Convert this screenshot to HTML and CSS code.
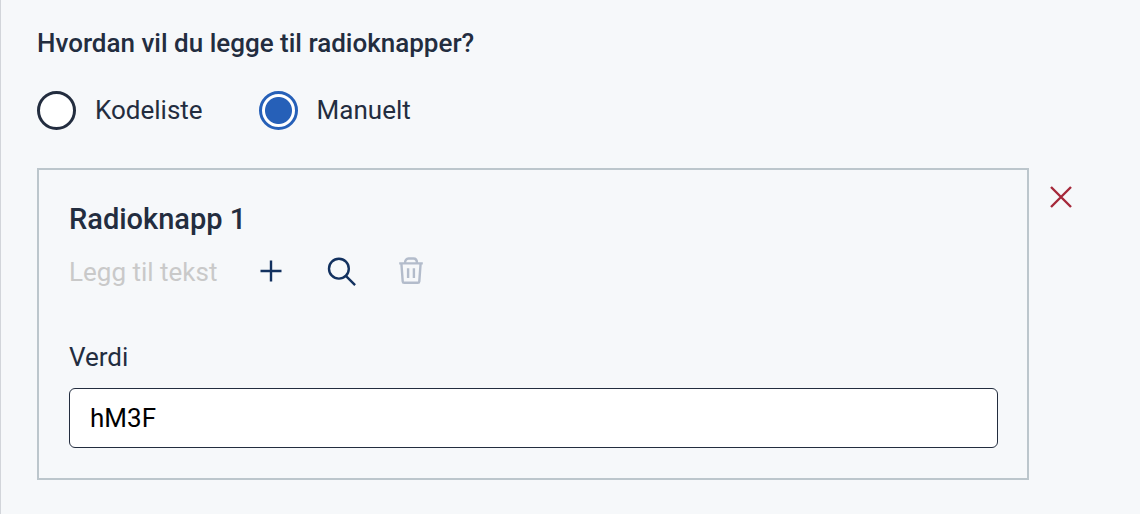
FILE: index.html
```html
<!DOCTYPE html>
<html lang="nb">
<head>
<meta charset="utf-8">
<title>Radioknapper</title>
<link rel="stylesheet" href="styles.css">
</head>
<body>
<main class="panel">
  <fieldset class="source">
    <legend class="source-title">Hvordan vil du legge til radioknapper?</legend>
    <div class="source-options">
      <label class="option"><input class="radio" type="radio" name="source" value="codelist"><span class="option-text">Kodeliste</span></label>
      <label class="option"><input class="radio" type="radio" name="source" value="manual" checked><span class="option-text">Manuelt</span></label>
    </div>
  </fieldset>
  <div class="item">
    <section class="card">
      <h2 class="card-title">Radioknapp 1</h2>
      <div class="text-row">
        <span class="placeholder">Legg til tekst</span>
        <div class="actions">
          <button class="icon-button" type="button" aria-label="Legg til">
            <svg class="icon" viewBox="0 0 32 32"><path d="M16 5.500v21M5.500 16h21"/></svg>
          </button>
          <button class="icon-button" type="button" aria-label="Søk">
            <svg class="icon" viewBox="0 0 32 32"><circle cx="13.900" cy="13.700" r="9.900"/><path d="M21.100 21.200l9 9"/></svg>
          </button>
          <button class="icon-button" type="button" aria-label="Slett" disabled>
            <svg class="icon" viewBox="0 0 32 32"><path d="M4.200 8.400h23.600M10 8.200c0-3 1.500-4.700 3.500-4.700h5c2 0 3.500 1.700 3.500 4.700M6.400 8.600l1.300 17.800q.1 1.400 1.500 1.400h13.600q1.400 0 1.500-1.400l1.300-17.800M13.100 13.300v9.600M18.900 13.300v9.600"/></svg>
          </button>
        </div>
      </div>
      <label class="field-label" for="value">Verdi</label>
      <input class="field" id="value" type="text" value="hM3F">
    </section>
    <button class="remove" type="button" aria-label="Fjern radioknapp 1">
      <svg class="icon" viewBox="0 0 32 32"><path d="M6 6l20 20M26 6l-20 20"/></svg>
    </button>
  </div>
</main>
</body>
</html>
```
FILE: styles.css
```css
* {
  box-sizing: border-box;
}

body {
  margin: 0;
  background: #f6f8fa;
  color: #232d3f;
  font: 400 26px/32px Roboto, "Liberation Sans", sans-serif;
}

.panel {
  min-height: 100vh;
  padding: 27px 47px 34px 36px;
  border-left: 1px solid #d2d5da;
}

.source {
  min-width: 0;
  margin: 0 0 38px;
  padding: 0;
  border: 0;
}

.source-title {
  padding: 0;
  font-weight: 500;
}

.source-options {
  display: flex;
  gap: 56px;
  padding-top: 32px;
}

.option {
  display: flex;
  align-items: center;
  gap: 19px;
}

.option-text {
  padding-bottom: 2px;
}

.radio {
  appearance: none;
  flex: none;
  width: 39px;
  height: 39px;
  margin: 0;
  border: 3px solid #232d3f;
  border-radius: 50%;
  background: #fff;
}

.radio:checked {
  border-color: #2660b8;
  background: radial-gradient(circle, #2660b8 13px, #fff 14px);
}

.item {
  display: flex;
  align-items: flex-start;
}

.card {
  flex: 1;
  min-width: 0;
  padding: 31px 29px 30px 30px;
  border: 2px solid #bcc6cc;
}

.card-title {
  margin: 0;
  font-weight: 500;
  font-size: 29px;
  line-height: 36px;
}

.text-row {
  display: flex;
  align-items: center;
  gap: 30px;
  margin-top: 12px;
}

.placeholder {
  padding-top: 2px;
  color: #c9c9c9;
}

.actions {
  display: flex;
  gap: 22px;
}

.icon-button,
.remove {
  display: grid;
  place-items: center;
  height: 44px;
  padding: 0;
  border: 0;
  background: none;
  color: #12315f;
}

.icon-button {
  width: 48px;
}

.icon-button:disabled {
  color: #b3bccb;
}

.remove {
  width: 64px;
  margin-top: 7px;
  color: #a5283a;
}

.icon {
  width: 32px;
  height: 32px;
  fill: none;
  stroke: currentColor;
  stroke-width: 2.4;
  stroke-linejoin: round;
}

.field-label {
  display: block;
  margin-top: 48px;
}

.field {
  display: block;
  width: 100%;
  height: 60px;
  margin-top: 15px;
  padding: 0 20px;
  border: 1px solid #232d3f;
  border-radius: 6px;
  background: #fff;
  color: #000;
  font: inherit;
}
```
